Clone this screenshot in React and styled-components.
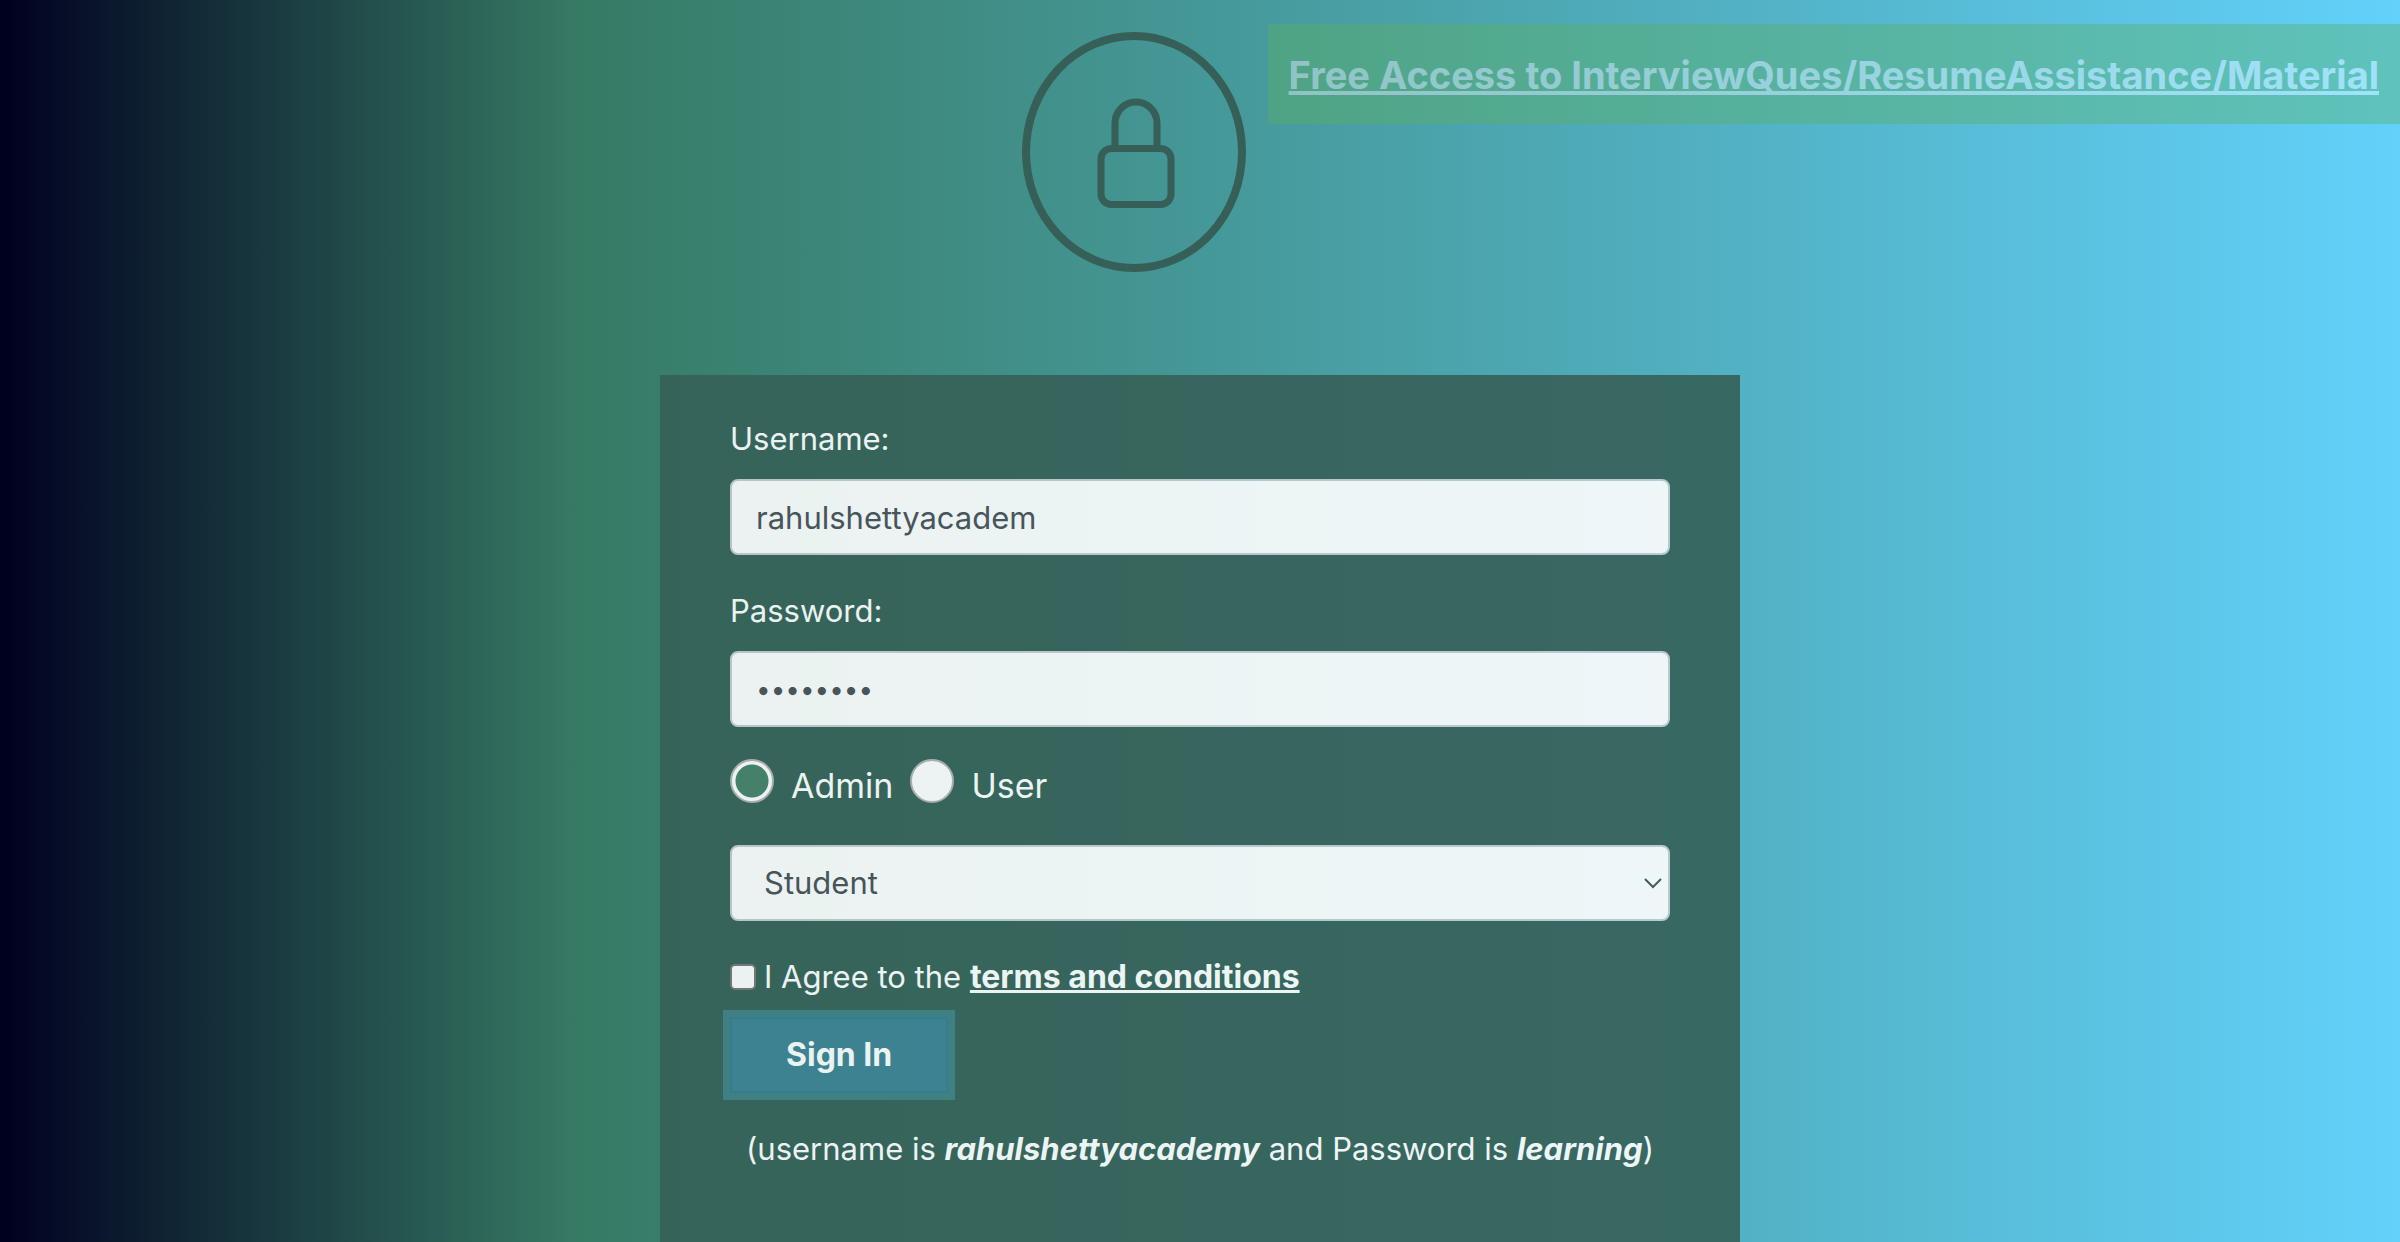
import React, { useState } from "react";
import styled, { createGlobalStyle } from "styled-components";

const GlobalStyle = createGlobalStyle`
  *, *::before, *::after { box-sizing: border-box; }
  body {
    margin: 0;
    font-family: Inter, "Liberation Sans", sans-serif;
    font-size: 31px;
    line-height: 48px;
    color: #ffffff;
  }
  input, select, button { font: inherit; }
`;

const Page = styled.div`
  display: flex;
  flex-direction: column;
  align-items: center;
  height: 100vh;
  overflow: hidden;
  background: linear-gradient(90deg, #00001f 0%, #367a64 24%, #62d1fb 100%);
`;

const Header = styled.header`
  display: flex;
  align-items: flex-start;
  justify-content: flex-end;
  gap: 22px;
  width: 100%;
  padding: 24px 0 103px;
`;

const Logo = styled.svg`
  flex: none;
  width: 224px;
  height: 240px;
  margin-top: 8px;
  fill: none;
  stroke: #365f57;
`;

const Banner = styled.div`
  padding: 21px 21px 19px;
  background: #5cb060;
  opacity: 0.4;
  font-size: 38px;
  line-height: 60px;
  font-weight: 700;
  white-space: nowrap;
`;

const TextLink = styled.a`
  color: #ffffff;
  font-size: ${(props) => (props.$large ? "38px" : "32px")};
  font-weight: 700;
  text-decoration: underline;
  text-decoration-thickness: ${(props) => (props.$large ? "4px" : "3px")};
  text-underline-offset: 2px;
`;

const Card = styled.form`
  display: flex;
  flex: 1 0 auto;
  flex-direction: column;
  gap: 32px;
  width: 45%;
  padding: 40px 70px 70px;
  background: #366158;
  opacity: 0.9;
`;

const Field = styled.div`
  display: flex;
  flex-direction: column;
  gap: 16px;
`;

const Input = styled.input`
  width: 100%;
  height: 76px;
  padding: 12px 24px;
  border: 2px solid #c4cdd2;
  border-radius: 8px;
  background: #ffffff;
  color: #495057;
  outline: none;

  &[type="password"] {
    font-size: 26px;
  }
`;

const RadioRow = styled.div`
  display: flex;
  gap: 17px;
`;

const RadioLabel = styled.label`
  display: flex;
  gap: 17px;
  font-size: 34px;
  line-height: 54px;
`;

const Radio = styled.input`
  appearance: none;
  width: 44px;
  height: 44px;
  margin: 0;
  border: 2px solid #b3b3b3;
  border-radius: 50%;
  background: #ffffff;

  &:checked {
    background: radial-gradient(circle, #47806a 0 16px, #ffffff 17px);
  }
`;

const SelectBox = styled.div`
  position: relative;
`;

const Select = styled.select`
  display: block;
  appearance: none;
  width: 100%;
  height: 76px;
  padding: 12px 32px;
  border: 2px solid #c4cdd2;
  border-radius: 8px;
  background: #ffffff;
  color: #495057;
`;

const Chevron = styled.svg`
  position: absolute;
  top: 32px;
  right: 7px;
  width: 20px;
  height: 12px;
  fill: none;
  stroke: #495057;
  stroke-width: 2;
  pointer-events: none;
`;

const Actions = styled.div`
  display: flex;
  flex-direction: column;
  align-items: flex-start;
  gap: 16px;
`;

const Agreement = styled.div`
  display: flex;
  align-items: center;
  gap: 8px;
`;

const Checkbox = styled.input`
  appearance: none;
  width: 26px;
  height: 26px;
  margin: 0;
  border: 2px solid #767676;
  border-radius: 5px;
  background: #ffffff;
`;

const SubmitButton = styled.button`
  height: 76px;
  padding: 0 54px;
  border: 2px solid #377c8e;
  border-radius: 0;
  background: #3d8294;
  box-shadow: 0 0 0 7px #408084;
  color: #ffffff;
  font-size: 32px;
  font-weight: 700;
`;

const Hint = styled.p`
  margin: 0;
  text-align: center;
`;

const Emphasis = styled.em`
  font-weight: 700;
`;

function LockLogo() {
  return (
    <Logo viewBox="0 0 224 240" aria-hidden="true">
      <ellipse cx="112" cy="120" rx="108" ry="116" strokeWidth="8" />
      <path d="M93 116V91a21 21 0 0 1 42 0v25" strokeWidth="7" />
      <rect x="79" y="116.500" width="70" height="56" rx="10.500" strokeWidth="7" />
    </Logo>
  );
}

export default function App() {
  const [username, setUsername] = useState("rahulshettyacadem");
  const [password, setPassword] = useState("learning");
  const [role, setRole] = useState("admin");

  return (
    <>
      <GlobalStyle />
      <Page>
        <Header>
          <LockLogo />
          <Banner>
            <TextLink href="#materials" $large>
              Free Access to InterviewQues/ResumeAssistance/Material
            </TextLink>
          </Banner>
        </Header>
        <Card onSubmit={(event) => event.preventDefault()}>
          <Field>
            <label htmlFor="username">Username:</label>
            <Input
              id="username"
              value={username}
              onChange={(event) => setUsername(event.target.value)}
            />
          </Field>
          <Field>
            <label htmlFor="password">Password:</label>
            <Input
              id="password"
              type="password"
              value={password}
              onChange={(event) => setPassword(event.target.value)}
            />
          </Field>
          <RadioRow>
            <RadioLabel>
              <Radio
                type="radio"
                name="role"
                checked={role === "admin"}
                onChange={() => setRole("admin")}
              />
              Admin
            </RadioLabel>
            <RadioLabel>
              <Radio
                type="radio"
                name="role"
                checked={role === "user"}
                onChange={() => setRole("user")}
              />
              User
            </RadioLabel>
          </RadioRow>
          <SelectBox>
            <Select aria-label="Occupation" defaultValue="student">
              <option value="student">Student</option>
              <option value="teacher">Teacher</option>
              <option value="consultant">Consultant</option>
            </Select>
            <Chevron viewBox="0 0 20 12" aria-hidden="true">
              <path d="M2 2l8 8 8-8" />
            </Chevron>
          </SelectBox>
          <Actions>
            <Agreement>
              <Checkbox id="terms" type="checkbox" />
              <label htmlFor="terms">
                I Agree to the <TextLink href="#terms">terms and conditions</TextLink>
              </label>
            </Agreement>
            <SubmitButton type="submit">Sign In</SubmitButton>
          </Actions>
          <Hint>
            (username is <Emphasis>rahulshettyacademy</Emphasis> and Password is{" "}
            <Emphasis>learning</Emphasis>)
          </Hint>
        </Card>
      </Page>
    </>
  );
}
